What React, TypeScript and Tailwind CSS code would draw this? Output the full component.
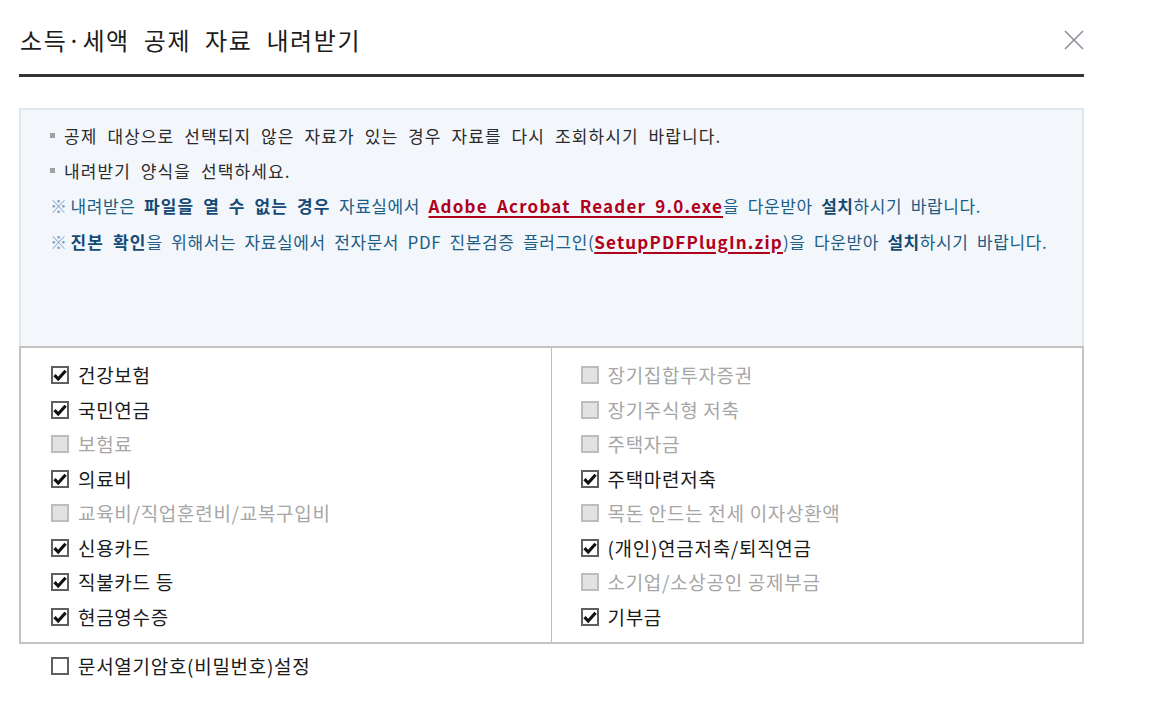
import React from "react";

type Item = { label: string; state: "on" | "off" | "disabled" };

const leftItems: Item[] = [
  { label: "건강보험", state: "on" },
  { label: "국민연금", state: "on" },
  { label: "보험료", state: "disabled" },
  { label: "의료비", state: "on" },
  { label: "교육비/직업훈련비/교복구입비", state: "disabled" },
  { label: "신용카드", state: "on" },
  { label: "직불카드 등", state: "on" },
  { label: "현금영수증", state: "on" },
];

const rightItems: Item[] = [
  { label: "장기집합투자증권", state: "disabled" },
  { label: "장기주식형 저축", state: "disabled" },
  { label: "주택자금", state: "disabled" },
  { label: "주택마련저축", state: "on" },
  { label: "목돈 안드는 전세 이자상환액", state: "disabled" },
  { label: "(개인)연금저축/퇴직연금", state: "on" },
  { label: "소기업/소상공인 공제부금", state: "disabled" },
  { label: "기부금", state: "on" },
];

const Box = ({ state }: { state: Item["state"] }) => {
  if (state === "disabled") {
    return <span className="w-[18px] h-[18px] shrink-0 border-2 border-[#bdbdbd] bg-[#e2e2e2]" />;
  }
  return (
    <span className="w-[18px] h-[18px] shrink-0 border-2 border-[#5f5f5f] bg-white flex items-center justify-center">
      {state === "on" && (
        <svg width="14" height="14" viewBox="0 0 14 14">
          <path d="M1.5 7.2 L5.2 11 L12.6 2.8" fill="none" stroke="#111" strokeWidth="3.2" />
        </svg>
      )}
    </span>
  );
};

const Row = ({ item }: { item: Item }) => (
  <div className="h-[34.5px] flex items-center gap-[9px]">
    <Box state={item.state} />
    <span className={item.state === "disabled" ? "text-[#a6a6a6]" : "text-[#1a1a1a]"}>{item.label}</span>
  </div>
);

export default function App() {
  return (
    <div
      className="w-[1152px] h-[713px] bg-white pl-[19px] pt-[21px]"
      style={{ fontFamily: '"Noto Sans CJK KR", "Noto Sans", sans-serif' }}
    >
      <div className="w-[1065px]">
        <div className="flex items-center justify-between h-[37px] pl-px">
          <h1 className="text-[24px] text-[#1c1c1c] tracking-[1.6px] [word-spacing:7px]">소득·세액 공제 자료 내려받기</h1>
          <svg width="20" height="20" viewBox="0 0 20 20">
            <path d="M1 1 L19 19 M19 1 L1 19" stroke="#8b8f9b" strokeWidth="1.6" />
          </svg>
        </div>
        <div className="mt-[16px] h-[3px] bg-[#333]" />

        <div className="mt-[31px] h-[238px] border-2 border-b-0 border-[#e1e7ee] bg-[#f3f7fb] pl-[29px] pt-[8px] text-[17px] tracking-[1.1px] [word-spacing:5px]">
          <p className="h-[35px] flex items-center text-[#2b2b2b]">
            <span className="w-[5px] h-[5px] bg-[#a0a0a0] mr-[9px]" />
            공제 대상으로 선택되지 않은 자료가 있는 경우 자료를 다시 조회하시기 바랍니다.
          </p>
          <p className="h-[35px] flex items-center text-[#2b2b2b]">
            <span className="w-[5px] h-[5px] bg-[#a0a0a0] mr-[9px]" />
            내려받기 양식을 선택하세요.
          </p>
          <p className="h-[36px] flex items-center text-[#1d5d86] whitespace-pre tracking-[0.6px] [word-spacing:4px]">
            <span className="text-[#7c9dc9] mr-[3px]">※</span>
            내려받은 <b className="text-[#164a74] tracking-[1.1px]">파일을 열 수 없는 경우</b> 자료실에서{" "}
            <a className="text-[#b0001c] font-bold underline underline-offset-[3px] decoration-2 tracking-[1.2px]">
              Adobe Acrobat Reader 9.0.exe
            </a>
            을 다운받아 <b className="text-[#164a74]">설치</b>하시기 바랍니다.
          </p>
          <p className="h-[35px] flex items-center text-[#1d5d86] whitespace-pre tracking-[0.6px] [word-spacing:4px]">
            <span className="text-[#7c9dc9] mr-[3px]">※</span>
            <b className="text-[#164a74] tracking-[1.1px]">진본 확인</b>을 위해서는 자료실에서 전자문서 PDF 진본검증 플러그인(
            <a className="text-[#b0001c] font-bold underline underline-offset-[3px] decoration-2 tracking-[1.2px]">
              SetupPDFPlugIn.zip
            </a>
            )을 다운받아 <b className="text-[#164a74]">설치</b>하시기 바랍니다.
          </p>
        </div>

        <div className="border-2 border-[#c3c3c3] grid grid-cols-2 text-[19px] tracking-[0.7px]">
          <div className="pl-[30px] pt-[10px] pb-[8px] border-r border-[#bdbdbd]">
            {leftItems.map((it) => (
              <Row key={it.label} item={it} />
            ))}
          </div>
          <div className="pl-[29px] pt-[10px] pb-[8px]">
            {rightItems.map((it) => (
              <Row key={it.label} item={it} />
            ))}
          </div>
        </div>

        <div className="pl-[32px] mt-[5px] text-[19px] tracking-[0.7px]">
          <Row item={{ label: "문서열기암호(비밀번호)설정", state: "off" }} />
        </div>
      </div>
    </div>
  );
}
